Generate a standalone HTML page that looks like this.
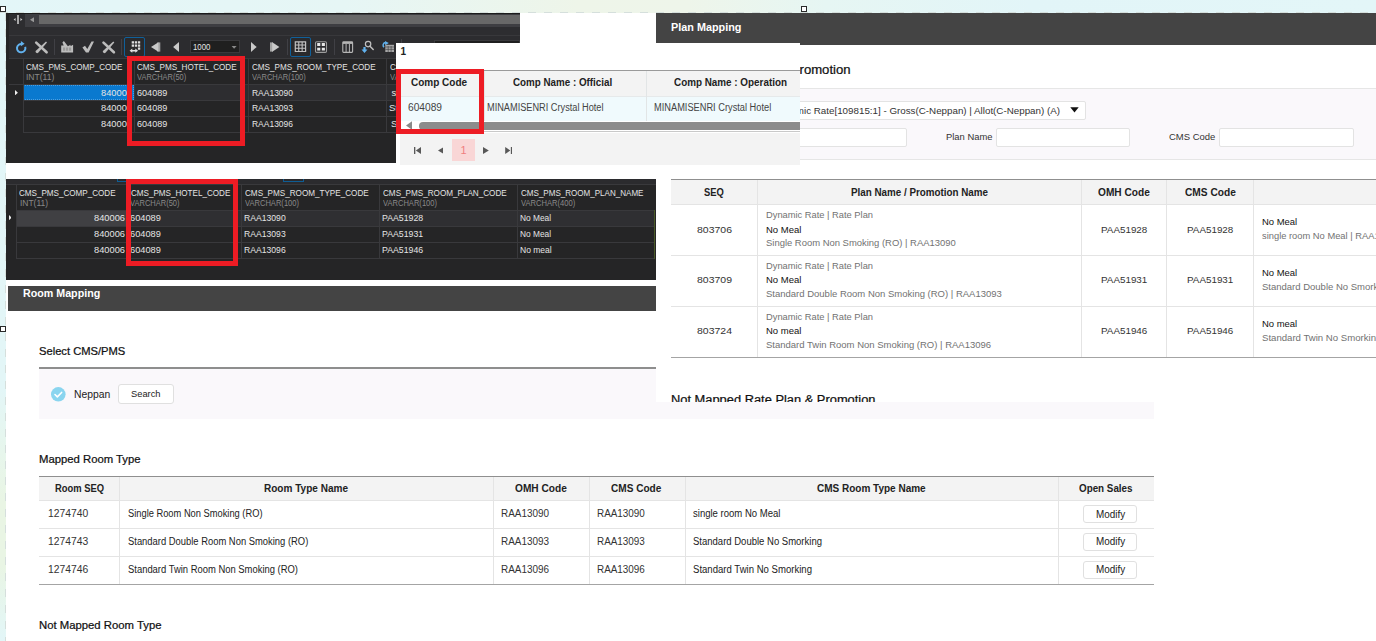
<!DOCTYPE html>
<html lang="en"><head><meta charset="utf-8"><title>Mapping</title><style>
html,body{margin:0;padding:0;}
body{width:1376px;height:641px;position:relative;overflow:hidden;background:#fff;font-family:"Liberation Sans", sans-serif;}
#r{position:absolute;left:0;top:0;width:1376px;height:641px;overflow:hidden;}
#r div,#r span,#r svg{position:absolute;}
#r div{box-sizing:border-box;}
#r .grp{left:0;top:0;width:0;height:0;}
#r span{white-space:pre;line-height:1;transform-origin:0 0;}
</style></head><body><div id="r">
<div class="grp page-bg">
<div style="left:0px;top:0px;width:1376px;height:13px;background:linear-gradient(90deg,#e3f6f8 0%,#e6f6f5 25%,#eef5e9 42%,#eef5ea 50%,#e6f6f3 60%,#e2f5f8 75%,#e3f6f8 100%);"></div>
<div style="left:0px;top:13px;width:6px;height:628px;background:linear-gradient(180deg,#e3f6f8 0%,#e3f6f7 60%,#e7f6ec 70%,#e9f5e4 78%,#e9f5e4 88%,#e4f6f3 97%,#e3f6f8 100%);"></div>
<div style="left:0px;top:12.2px;width:1376px;height:0.9px;background:repeating-linear-gradient(90deg,#d5dfdc 0 8px,transparent 8px 16px);"></div>
<div style="left:5.1px;top:13px;width:0.9px;height:628px;background:repeating-linear-gradient(180deg,#d5dfdc 0 8px,transparent 8px 16px);"></div>
</div>
<div class="grp plan-mapping">
<div style="left:656px;top:13px;width:720px;height:31.7px;background:#444;"></div>
<span style="left:671.20px;top:22px;font-size:11px;color:#fff;font-weight:bold;transform:scaleX(0.9846);">Plan Mapping</span>
<span style="left:666.21px;top:64px;font-size:12.5px;color:#111;transform:scaleX(1.0500);-webkit-text-stroke:0.24px #111;">Mapped Rate Plan &amp; Promotion</span>
<div style="left:671px;top:88px;width:705px;height:72px;background:#faf8fb;border-top:1px solid #e6e6e6;border-bottom:1px solid #e6e6e6;"></div>
<div style="left:700px;top:100.5px;width:386px;height:19px;background:#fff;border:1px solid #e3e3e3;border-radius:2px;"></div>
<span style="left:773.30px;top:106px;font-size:9.5px;color:#333;transform:scaleX(1.0301);">Dynamic Rate[109815:1] - Gross(C-Neppan) | Allot(C-Neppan) (A)</span>
<svg style="left:1070px;top:107px" width="9" height="6" viewBox="0 0 9 6"><path d="M0.3 0.3h8.4L4.5 5.6z" fill="#111"/></svg>
<div style="left:700px;top:128px;width:207px;height:18.6px;background:#fff;border:1px solid #e3e3e3;border-radius:2px;"></div>
<span style="left:946.20px;top:132px;font-size:9.5px;color:#333;transform:scaleX(0.9894);">Plan Name</span>
<div style="left:995.5px;top:128px;width:134.5px;height:18.6px;background:#fff;border:1px solid #e3e3e3;border-radius:2px;"></div>
<span style="left:1169.00px;top:132px;font-size:9.5px;color:#333;transform:scaleX(0.9964);">CMS Code</span>
<div style="left:1218.5px;top:128px;width:135px;height:18.6px;background:#fff;border:1px solid #e3e3e3;border-radius:2px;"></div>
<div style="left:671px;top:179.3px;width:705px;height:1.2px;background:#8f8f8f;"></div>
<div style="left:671px;top:180.3px;width:705px;height:24px;background:#f3f3f3;"></div>
<div style="left:671px;top:204.2px;width:705px;height:1px;background:#e4e4e4;"></div>
<div style="left:671px;top:255.2px;width:705px;height:1px;background:#e4e4e4;"></div>
<div style="left:671px;top:306.3px;width:705px;height:1px;background:#e4e4e4;"></div>
<div style="left:671px;top:356.8px;width:705px;height:1.7px;background:#a4a4a4;"></div>
<div style="left:757.3px;top:180.3px;width:1px;height:176.5px;background:#e4e4e4;"></div>
<div style="left:1081px;top:180.3px;width:1px;height:176.5px;background:#e4e4e4;"></div>
<div style="left:1166.4px;top:180.3px;width:1px;height:176.5px;background:#e4e4e4;"></div>
<div style="left:1253.3px;top:180.3px;width:1px;height:176.5px;background:#e4e4e4;"></div>
<span style="left:704.40px;top:188px;font-size:10px;color:#222;font-weight:bold;transform:scaleX(0.9373);">SEQ</span>
<span style="left:850.50px;top:188px;font-size:10px;color:#222;font-weight:bold;transform:scaleX(0.9822);">Plan Name / Promotion Name</span>
<span style="left:1098.20px;top:188px;font-size:10px;color:#222;font-weight:bold;transform:scaleX(1.0135);">OMH Code</span>
<span style="left:1185.00px;top:188px;font-size:10px;color:#222;font-weight:bold;transform:scaleX(1.0160);">CMS Code</span>
<span style="left:696.80px;top:225px;font-size:9.5px;color:#333;transform:scaleX(1.1040);">803706</span>
<span style="left:766.00px;top:210px;font-size:9.5px;color:#727272;transform:scaleX(0.9805);">Dynamic Rate | Rate Plan</span>
<span style="left:766.00px;top:225px;font-size:9.5px;color:#111;">No Meal</span>
<span style="left:766.00px;top:238px;font-size:9.5px;color:#727272;transform:scaleX(0.9938);">Single Room Non Smoking (RO) | RAA13090</span>
<span style="left:1100.95px;top:225px;font-size:9.5px;color:#333;transform:scaleX(1.0350);">PAA51928</span>
<span style="left:1187.25px;top:225px;font-size:9.5px;color:#333;transform:scaleX(1.0350);">PAA51928</span>
<span style="left:1262.00px;top:217px;font-size:9.5px;color:#111;transform:scaleX(0.9951);">No Meal</span>
<span style="left:1262.00px;top:231px;font-size:9.5px;color:#727272;transform:scaleX(0.9828);">single room No Meal | RAA13090</span>
<span style="left:696.80px;top:275px;font-size:9.5px;color:#333;transform:scaleX(1.1040);">803709</span>
<span style="left:766.00px;top:261px;font-size:9.5px;color:#727272;transform:scaleX(0.9805);">Dynamic Rate | Rate Plan</span>
<span style="left:766.00px;top:275px;font-size:9.5px;color:#111;">No Meal</span>
<span style="left:766.00px;top:289px;font-size:9.5px;color:#727272;">Standard Double Room Non Smoking (RO) | RAA13093</span>
<span style="left:1100.95px;top:275px;font-size:9.5px;color:#333;transform:scaleX(1.0350);">PAA51931</span>
<span style="left:1187.25px;top:275px;font-size:9.5px;color:#333;transform:scaleX(1.0350);">PAA51931</span>
<span style="left:1262.00px;top:268px;font-size:9.5px;color:#111;transform:scaleX(0.9951);">No Meal</span>
<span style="left:1262.00px;top:282px;font-size:9.5px;color:#727272;">Standard Double No Smorking | RAA13093</span>
<span style="left:696.80px;top:326px;font-size:9.5px;color:#333;transform:scaleX(1.1040);">803724</span>
<span style="left:766.00px;top:312px;font-size:9.5px;color:#727272;transform:scaleX(0.9805);">Dynamic Rate | Rate Plan</span>
<span style="left:766.00px;top:326px;font-size:9.5px;color:#111;">No meal</span>
<span style="left:766.00px;top:340px;font-size:9.5px;color:#727272;">Standard Twin Room Non Smoking (RO) | RAA13096</span>
<span style="left:1100.95px;top:326px;font-size:9.5px;color:#333;transform:scaleX(1.0350);">PAA51946</span>
<span style="left:1187.25px;top:326px;font-size:9.5px;color:#333;transform:scaleX(1.0350);">PAA51946</span>
<span style="left:1262.00px;top:319px;font-size:9.5px;color:#111;transform:scaleX(0.9951);">No meal</span>
<span style="left:1262.00px;top:333px;font-size:9.5px;color:#727272;transform:scaleX(1.0104);">Standard Twin No Smorking | RAA13096</span>
<span style="left:671.00px;top:394px;font-size:12.5px;color:#111;transform:scaleX(1.0291);-webkit-text-stroke:0.24px #111;">Not Mapped Rate Plan &amp; Promotion</span>
</div>
<div class="grp room-mapping">
<div style="left:6px;top:402px;width:1148.3px;height:239px;background:#fff;"></div>
<div style="left:8px;top:285.5px;width:648px;height:25px;background:#444;"></div>
<span style="left:23.00px;top:288px;font-size:11px;color:#fff;font-weight:bold;transform:scaleX(0.9718);">Room Mapping</span>
<span style="left:39.20px;top:346px;font-size:11.5px;color:#111;transform:scaleX(0.9715);-webkit-text-stroke:0.24px #111;">Select CMS/PMS</span>
<div style="left:39px;top:367px;width:617px;height:1.7px;background:#8e8e8e;"></div>
<div style="left:39px;top:368.7px;width:617px;height:50.1px;background:#faf8fb;"></div>
<div style="left:656px;top:402px;width:498.3px;height:16.8px;background:#faf8fb;"></div>
<svg style="left:51.1px;top:387.1px" width="14.6" height="14.6" viewBox="0 0 14 14"><circle cx="7" cy="7" r="7" fill="#8ad5ef"/><path d="M3.8 7.2l2.3 2.3 4.1-4.3" fill="none" stroke="#fff" stroke-width="1.5" stroke-linecap="round" stroke-linejoin="round"/></svg>
<span style="left:73.70px;top:390px;font-size:10px;color:#222;transform:scaleX(1.0362);">Neppan</span>
<div style="left:118.2px;top:384.3px;width:55.5px;height:19.4px;background:#fff;border:1px solid #e0e0e0;border-radius:3px;"></div>
<span style="left:131.30px;top:389px;font-size:9.5px;color:#222;transform:scaleX(0.9798);">Search</span>
<span style="left:39.20px;top:454px;font-size:11.5px;color:#111;transform:scaleX(0.9830);-webkit-text-stroke:0.24px #111;">Mapped Room Type</span>
<div style="left:39px;top:476.3px;width:1115.3px;height:1.2px;background:#8f8f8f;"></div>
<div style="left:39px;top:477.3px;width:1115.3px;height:23.4px;background:#f3f3f3;"></div>
<div style="left:39px;top:500px;width:1115.3px;height:1px;background:#e4e4e4;"></div>
<div style="left:39px;top:528px;width:1115.3px;height:1px;background:#e4e4e4;"></div>
<div style="left:39px;top:556px;width:1115.3px;height:1px;background:#e4e4e4;"></div>
<div style="left:39px;top:583.7px;width:1115.3px;height:1.7px;background:#a4a4a4;"></div>
<div style="left:119.3px;top:477.3px;width:1px;height:106.69999999999999px;background:#e4e4e4;"></div>
<div style="left:493px;top:477.3px;width:1px;height:106.69999999999999px;background:#e4e4e4;"></div>
<div style="left:589px;top:477.3px;width:1px;height:106.69999999999999px;background:#e4e4e4;"></div>
<div style="left:685px;top:477.3px;width:1px;height:106.69999999999999px;background:#e4e4e4;"></div>
<div style="left:1058px;top:477.3px;width:1px;height:106.69999999999999px;background:#e4e4e4;"></div>
<span style="left:54.50px;top:484px;font-size:10px;color:#222;font-weight:bold;transform:scaleX(0.9381);">Room SEQ</span>
<span style="left:264.00px;top:484px;font-size:10px;color:#222;font-weight:bold;transform:scaleX(1.0032);">Room Type Name</span>
<span style="left:514.50px;top:484px;font-size:10px;color:#222;font-weight:bold;transform:scaleX(1.0135);">OMH Code</span>
<span style="left:611.45px;top:484px;font-size:10px;color:#222;font-weight:bold;transform:scaleX(1.0060);">CMS Code</span>
<span style="left:816.95px;top:484px;font-size:10px;color:#222;font-weight:bold;">CMS Room Type Name</span>
<span style="left:1079.45px;top:484px;font-size:10px;color:#222;font-weight:bold;transform:scaleX(0.9822);">Open Sales</span>
<span style="left:47.80px;top:509px;font-size:10px;color:#333;transform:scaleX(1.0324);">1274740</span>
<span style="left:127.50px;top:509px;font-size:10px;color:#222;transform:scaleX(0.9308);">Single Room Non Smoking (RO)</span>
<span style="left:500.80px;top:509px;font-size:10px;color:#333;transform:scaleX(0.9922);">RAA13090</span>
<span style="left:596.80px;top:509px;font-size:10px;color:#333;transform:scaleX(0.9881);">RAA13090</span>
<span style="left:693.00px;top:509px;font-size:10px;color:#222;transform:scaleX(0.9540);">single room No Meal</span>
<div style="left:1083.1px;top:505.1px;width:54.4px;height:18.4px;background:#fff;border:1px solid #e0e0e0;border-radius:3px;"></div>
<span style="left:1095.60px;top:510px;font-size:10px;color:#222;transform:scaleX(0.9914);">Modify</span>
<span style="left:47.80px;top:537px;font-size:10px;color:#333;transform:scaleX(1.0324);">1274743</span>
<span style="left:127.50px;top:537px;font-size:10px;color:#222;transform:scaleX(0.9402);">Standard Double Room Non Smoking (RO)</span>
<span style="left:500.80px;top:537px;font-size:10px;color:#333;transform:scaleX(0.9922);">RAA13093</span>
<span style="left:596.80px;top:537px;font-size:10px;color:#333;transform:scaleX(0.9881);">RAA13093</span>
<span style="left:693.00px;top:537px;font-size:10px;color:#222;transform:scaleX(0.9510);">Standard Double No Smorking</span>
<div style="left:1083.1px;top:533.0px;width:54.4px;height:18.4px;background:#fff;border:1px solid #e0e0e0;border-radius:3px;"></div>
<span style="left:1095.60px;top:537px;font-size:10px;color:#222;transform:scaleX(0.9914);">Modify</span>
<span style="left:47.80px;top:565px;font-size:10px;color:#333;transform:scaleX(1.0324);">1274746</span>
<span style="left:127.50px;top:565px;font-size:10px;color:#222;transform:scaleX(0.9421);">Standard Twin Room Non Smoking (RO)</span>
<span style="left:500.80px;top:565px;font-size:10px;color:#333;transform:scaleX(0.9922);">RAA13096</span>
<span style="left:596.80px;top:565px;font-size:10px;color:#333;transform:scaleX(0.9881);">RAA13096</span>
<span style="left:693.00px;top:565px;font-size:10px;color:#222;transform:scaleX(0.9571);">Standard Twin No Smorking</span>
<div style="left:1083.1px;top:560.9px;width:54.4px;height:18.4px;background:#fff;border:1px solid #e0e0e0;border-radius:3px;"></div>
<span style="left:1095.60px;top:565px;font-size:10px;color:#222;transform:scaleX(0.9914);">Modify</span>
<span style="left:39.20px;top:620px;font-size:11.5px;color:#111;transform:scaleX(0.9843);-webkit-text-stroke:0.24px #111;">Not Mapped Room Type</span>
</div>
<div class="grp db-grid-1">
<div style="left:6px;top:13px;width:514px;height:149.5px;background:#2d2d30;"></div>
<div style="left:6px;top:13px;width:514px;height:1px;background:#1c1c1c;"></div>
<div style="left:6px;top:13px;width:3px;height:149.5px;background:#252526;"></div>
<div style="left:25px;top:14px;width:495px;height:12.5px;background:#3e3e42;"></div>
<div style="left:39px;top:15.4px;width:481px;height:8.4px;background:#686868;"></div>
<svg style="left:29.5px;top:16.8px" width="4.5" height="5.6" viewBox="0 0 4.5 5.6"><path d="M4.5 0v5.6L0 2.8z" fill="#999"/></svg>
<svg style="left:12.5px;top:15px" width="10" height="9" viewBox="0 0 10 9"><rect x="4.3" y="0" width="1.4" height="9" fill="#ddd"/><path d="M2.6 2.9v3.2L0.6 4.5zM7.4 2.9v3.2l2-1.6z" fill="#ccc"/></svg>
<div style="left:9px;top:35.1px;width:511px;height:1px;background:#38383b;"></div>
<div style="left:9px;top:36.1px;width:511px;height:21.5px;background:#2c2c2f;"></div>
<div style="left:54.2px;top:39px;width:1px;height:16px;background:#404045;"></div>
<div style="left:121.1px;top:39px;width:1px;height:16px;background:#404045;"></div>
<div style="left:286.8px;top:39px;width:1px;height:16px;background:#404045;"></div>
<div style="left:334px;top:39px;width:1px;height:16px;background:#404045;"></div>
<div style="left:400.9px;top:39px;width:1px;height:16px;background:#404045;"></div>
<div style="left:124.2px;top:37px;width:21px;height:19.6px;background:#2a2a2c;border:1.5px solid #10609a;border-radius:2px;"></div>
<div style="left:290px;top:37px;width:21px;height:19.6px;background:#2a2a2c;border:1.5px solid #10609a;border-radius:2px;"></div>
<div style="left:189.5px;top:40.3px;width:50.6px;height:12.8px;background:#1f1f1f;border:1px solid #39393c;"></div>
<div style="left:434px;top:40.3px;width:86px;height:12.8px;background:#1f1f1f;border:1px solid #39393c;"></div>
<span style="left:193.00px;top:42px;font-size:9.5px;color:#e6e6e6;transform:scaleX(0.8231);">1000</span>
<svg style="left:0;top:0" width="520" height="60" viewBox="0 0 520 60"><path d="M22.3 44.1A4.2 4.2 0 1 0 25.2 46.9" fill="none" stroke="#62b2ee" stroke-width="2"/><path d="M20.9 41.1l3.7 2.7-3.7 2.5z" fill="#62b2ee"/><path d="M36.2 42.6L46.6 52.3" stroke="#bcbcbc" stroke-width="2.6" stroke-linecap="round" fill="none"/><path d="M46 41.6l1 0.8L38.2 52.8a1.7 1.7 0 0 1-2.6-1.9z" fill="#bcbcbc"/><path d="M103.5 42.6L113.9 52.3" stroke="#bcbcbc" stroke-width="2.6" stroke-linecap="round" fill="none"/><path d="M113.3 41.6l1 0.8L105.5 52.8a1.7 1.7 0 0 1-2.6-1.9z" fill="#bcbcbc"/><path d="M61.2 52.4V45.6h2.5l-1.3-3 1.5-1.6 3.4 4.4 0.6 0.9 2.6-1.5v1.4l2.6-1.4v7.6z" fill="#bdbdbd"/><path d="M63 47.4h2.2v3.4H63zM66 47.4h2.2v3.4H66zM69 47.4h2.2v3.4H69z" fill="#9a9a9a"/><path d="M82.4 47.6l2.6-1.8 2.3 3.1 4.2-7.4h2.5L88.6 52.5h-2.6z" fill="#bcbcbc"/><path d="M131.7 41.3h2.3v2.3h-2.3zM131.7 44.4h2.3v2.3h-2.3zM134.8 41.3h2.3v2.3h-2.3zM134.8 44.4h2.3v2.3h-2.3zM137.9 41.3h2.3v2.3h-2.3zM137.9 44.4h2.3v2.3h-2.3zM137.9 47.5h2.3v2.3h-2.3z" fill="#dedede"/><path d="M129.6 50.7l2.7-2.1v1.3h3v-1.3l2.7 2.1-2.7 2.1v-1.3h-3v1.3z" fill="#e2e2e2"/><path d="M157.3 42.4h3v9.2h-3z" fill="#a2a2a2"/><path d="M158.4 42.2v9.6L151 47z" fill="#c9c9c9"/><path d="M179 42v10l-5.9-5z" fill="#c9c9c9"/><path d="M251 42v10l5.7-5z" fill="#c9c9c9"/><path d="M270 42.4h3v9.2h-3z" fill="#a2a2a2"/><path d="M272.2 42.2v9.6l7.2-4.8z" fill="#c9c9c9"/><path d="M231.6 45.9h5l-2.5 2.8z" fill="#8a8a8a"/><path fill-rule="evenodd" d="M294.7 41.3h11.5v10.8h-11.5zM295.9 42.4h2.3v2.1h-2.3zM295.9 45.6h2.3v2.1h-2.3zM295.9 48.8h2.3v2.1h-2.3zM299.3 42.4h2.3v2.1h-2.3zM299.3 45.6h2.3v2.1h-2.3zM299.3 48.8h2.3v2.1h-2.3zM302.7 42.4h2.3v2.1h-2.3zM302.7 45.6h2.3v2.1h-2.3zM302.7 48.8h2.3v2.1h-2.3z" fill="#c2c2c2"/><rect x="315.5" y="41.8" width="11" height="10.6" rx="1.2" fill="none" stroke="#9c9c9c" stroke-width="1.1"/><path d="M317.2 43.1h3.1v2.8h-3.1zM321.8 43.1h3.1v2.8h-3.1zM317.2 47.8h3.1v2.8h-3.1zM321.8 47.8h3.1v2.8h-3.1z" fill="#e8e8e8"/><rect x="342.8" y="41.9" width="9.8" height="10.5" rx="0.8" fill="none" stroke="#b6b6b6" stroke-width="1.1"/><path d="M342.8 42h9.8v1.9h-9.8z" fill="#b6b6b6"/><path d="M346.1 44v8.4M349.4 44v8.4" stroke="#b6b6b6" stroke-width="1"/><circle cx="368.1" cy="44.1" r="2.7" fill="none" stroke="#c0c0c0" stroke-width="1.2"/><path d="M370 46.2l3.2 3.3" stroke="#c0c0c0" stroke-width="1.5" stroke-linecap="round"/><path d="M363.4 47h2.2v2.6h1.9l-3 3.4-3-3.4h1.9z" fill="#62b2ee"/><path d="M384 47.2a2.7 2.7 0 0 1 1.4-4.7" fill="none" stroke="#62b2ee" stroke-width="1.5"/><path d="M385 41l3.8 2-3.6 2.3z" fill="#62b2ee"/><path d="M385.3 44.8h8.7v7.2h-8.7z" fill="#a6a6a6"/><path d="M385.3 47h8.7M385.3 49.4h8.7M388.2 46v6M391.1 46v6" stroke="#3a3a3c" stroke-width="0.6"/></svg>
<div style="left:9px;top:57.5px;width:511px;height:105px;background:#252526;"></div>
<div style="left:134px;top:84.5px;width:386px;height:15.5px;background:#2d2d30;"></div>
<div style="left:23px;top:84.5px;width:111px;height:15.8px;background:#0a79cf;border:1px dotted #4d9fe0;"></div>
<div style="left:9px;top:57.5px;width:511px;height:1px;background:#39393c;"></div>
<div style="left:9px;top:83.6px;width:511px;height:1px;background:#39393c;"></div>
<div style="left:23px;top:100.2px;width:511px;height:1px;background:#39393c;"></div>
<div style="left:23px;top:116px;width:511px;height:1px;background:#39393c;"></div>
<div style="left:23px;top:131.6px;width:511px;height:1px;background:#39393c;"></div>
<div style="left:23px;top:57.5px;width:1px;height:75px;background:#39393c;"></div>
<div style="left:134px;top:57.5px;width:1px;height:75px;background:#39393c;"></div>
<div style="left:248.3px;top:57.5px;width:1px;height:75px;background:#39393c;"></div>
<div style="left:386px;top:57.5px;width:1px;height:75px;background:#39393c;"></div>
<svg style="left:14.8px;top:90.1px" width="2.9" height="5.4" viewBox="0 0 3.4 6" preserveAspectRatio="none"><path d="M0 0l3.4 3L0 6z" fill="#f0f0f0"/></svg>
<span style="left:26.00px;top:62px;font-size:9.5px;color:#e4e4e4;transform:scaleX(0.8502);">CMS_PMS_COMP_CODE</span>
<span style="left:26.20px;top:73px;font-size:8.5px;color:#8a8a8a;transform:scaleX(1.0040);">INT(11)</span>
<span style="left:137.00px;top:62px;font-size:9.5px;color:#e4e4e4;transform:scaleX(0.8537);">CMS_PMS_HOTEL_CODE</span>
<span style="left:137.00px;top:73px;font-size:8.5px;color:#8a8a8a;transform:scaleX(0.8778);">VARCHAR(50)</span>
<span style="left:251.80px;top:62px;font-size:9.5px;color:#e4e4e4;transform:scaleX(0.8544);">CMS_PMS_ROOM_TYPE_CODE</span>
<span style="left:252.00px;top:73px;font-size:8.5px;color:#8a8a8a;transform:scaleX(0.8851);">VARCHAR(100)</span>
<span style="left:390.00px;top:62px;font-size:9.5px;color:#e4e4e4;transform:scaleX(0.8572);">CMS_PMS_ROOM_TYPE_NAME</span>
<span style="left:390.00px;top:73px;font-size:8.5px;color:#8a8a8a;transform:scaleX(0.8851);">VARCHAR(400)</span>
<span style="left:101.00px;top:88px;font-size:9.5px;color:#e4e4e4;transform:scaleX(0.9778);">840006</span>
<span style="left:137.00px;top:88px;font-size:9.5px;color:#e4e4e4;transform:scaleX(0.9557);">604089</span>
<span style="left:251.50px;top:88px;font-size:9.5px;color:#e4e4e4;transform:scaleX(0.8922);">RAA13090</span>
<span style="left:391.50px;top:88px;font-size:9.5px;color:#e4e4e4;">single room No Meal</span>
<span style="left:101.00px;top:103px;font-size:9.5px;color:#e4e4e4;transform:scaleX(0.9778);">840006</span>
<span style="left:137.00px;top:103px;font-size:9.5px;color:#e4e4e4;transform:scaleX(0.9557);">604089</span>
<span style="left:251.50px;top:103px;font-size:9.5px;color:#e4e4e4;transform:scaleX(0.8922);">RAA13093</span>
<span style="left:389.00px;top:103px;font-size:9.5px;color:#e4e4e4;">Standard Double No Smorking</span>
<span style="left:101.00px;top:119px;font-size:9.5px;color:#e4e4e4;transform:scaleX(0.9778);">840006</span>
<span style="left:137.00px;top:119px;font-size:9.5px;color:#e4e4e4;transform:scaleX(0.9557);">604089</span>
<span style="left:251.50px;top:119px;font-size:9.5px;color:#e4e4e4;transform:scaleX(0.8922);">RAA13096</span>
<span style="left:391.00px;top:119px;font-size:9.5px;color:#e4e4e4;">Standard Twin No Smorking</span>
<div style="left:127px;top:56px;width:118px;height:90px;background:transparent;border:5px solid #ed1c24;"></div>
</div>
<div class="grp db-grid-2">
<div style="left:6.3px;top:179px;width:649.7px;height:100.6px;background:#252526;"></div>
<div style="left:6.3px;top:179px;width:649.7px;height:5.4px;background:#2b2b2e;"></div>
<div style="left:117px;top:179px;width:9.5px;height:3.3px;background:transparent;border:1px solid #0e5d94;border-top:none;"></div>
<div style="left:283px;top:179px;width:20.5px;height:3.3px;background:transparent;border:1px solid #0e5d94;border-top:none;"></div>
<div style="left:16px;top:210.2px;width:639px;height:16px;background:#2f2f32;"></div>
<div style="left:16px;top:210.2px;width:110px;height:16px;background:#404043;"></div>
<div style="left:6.3px;top:184.4px;width:649.7px;height:1px;background:#39393c;"></div>
<div style="left:16px;top:209.7px;width:639px;height:1px;background:#39393c;"></div>
<div style="left:16px;top:226.3px;width:639px;height:1px;background:#39393c;"></div>
<div style="left:16px;top:242.3px;width:639px;height:1px;background:#39393c;"></div>
<div style="left:16px;top:258px;width:639px;height:1px;background:#39393c;"></div>
<div style="left:15.6px;top:184.4px;width:1px;height:74px;background:#39393c;"></div>
<div style="left:126px;top:184.4px;width:1px;height:74px;background:#39393c;"></div>
<div style="left:240.8px;top:184.4px;width:1px;height:74px;background:#39393c;"></div>
<div style="left:379px;top:184.4px;width:1px;height:74px;background:#39393c;"></div>
<div style="left:517px;top:184.4px;width:1px;height:74px;background:#39393c;"></div>
<div style="left:654.2px;top:209.7px;width:1px;height:49px;background:#4a5a28;"></div>
<svg style="left:8.5px;top:215.2px" width="2.6" height="5.2" viewBox="0 0 3 6" preserveAspectRatio="none"><path d="M0 0l3 3L0 6z" fill="#f0f0f0"/></svg>
<span style="left:19.40px;top:188px;font-size:9.5px;color:#e4e4e4;transform:scaleX(0.8511);">CMS_PMS_COMP_CODE</span>
<span style="left:19.60px;top:199px;font-size:8.5px;color:#8a8a8a;transform:scaleX(0.9933);">INT(11)</span>
<span style="left:131.00px;top:188px;font-size:9.5px;color:#e4e4e4;transform:scaleX(0.8511);">CMS_PMS_HOTEL_CODE</span>
<span style="left:130.00px;top:199px;font-size:8.5px;color:#8a8a8a;transform:scaleX(0.8832);">VARCHAR(50)</span>
<span style="left:244.50px;top:188px;font-size:9.5px;color:#e4e4e4;transform:scaleX(0.8551);">CMS_PMS_ROOM_TYPE_CODE</span>
<span style="left:244.70px;top:199px;font-size:8.5px;color:#8a8a8a;transform:scaleX(0.8884);">VARCHAR(100)</span>
<span style="left:382.50px;top:188px;font-size:9.5px;color:#e4e4e4;transform:scaleX(0.8551);">CMS_PMS_ROOM_PLAN_CODE</span>
<span style="left:382.70px;top:199px;font-size:8.5px;color:#8a8a8a;transform:scaleX(0.8884);">VARCHAR(100)</span>
<span style="left:520.50px;top:188px;font-size:9.5px;color:#e4e4e4;transform:scaleX(0.8468);">CMS_PMS_ROOM_PLAN_NAME</span>
<span style="left:520.70px;top:199px;font-size:8.5px;color:#8a8a8a;transform:scaleX(0.8934);">VARCHAR(400)</span>
<span style="left:93.70px;top:213px;font-size:9.5px;color:#e4e4e4;transform:scaleX(0.9778);">840006</span>
<span style="left:129.70px;top:213px;font-size:9.5px;color:#e4e4e4;transform:scaleX(0.9715);">604089</span>
<span style="left:244.00px;top:213px;font-size:9.5px;color:#e4e4e4;transform:scaleX(0.9074);">RAA13090</span>
<span style="left:382.00px;top:213px;font-size:9.5px;color:#e4e4e4;transform:scaleX(0.9210);">PAA51928</span>
<span style="left:520.30px;top:213px;font-size:9.5px;color:#e4e4e4;transform:scaleX(0.8763);">No Meal</span>
<span style="left:93.70px;top:229px;font-size:9.5px;color:#e4e4e4;transform:scaleX(0.9778);">840006</span>
<span style="left:129.70px;top:229px;font-size:9.5px;color:#e4e4e4;transform:scaleX(0.9715);">604089</span>
<span style="left:244.00px;top:229px;font-size:9.5px;color:#e4e4e4;transform:scaleX(0.9074);">RAA13093</span>
<span style="left:382.00px;top:229px;font-size:9.5px;color:#e4e4e4;transform:scaleX(0.9210);">PAA51931</span>
<span style="left:520.30px;top:229px;font-size:9.5px;color:#e4e4e4;transform:scaleX(0.8763);">No Meal</span>
<span style="left:93.70px;top:245px;font-size:9.5px;color:#e4e4e4;transform:scaleX(0.9778);">840006</span>
<span style="left:129.70px;top:245px;font-size:9.5px;color:#e4e4e4;transform:scaleX(0.9715);">604089</span>
<span style="left:244.00px;top:245px;font-size:9.5px;color:#e4e4e4;transform:scaleX(0.9074);">RAA13096</span>
<span style="left:382.00px;top:245px;font-size:9.5px;color:#e4e4e4;transform:scaleX(0.9210);">PAA51946</span>
<span style="left:520.30px;top:245px;font-size:9.5px;color:#e4e4e4;transform:scaleX(0.8961);">No meal</span>
<div style="left:126px;top:179px;width:112px;height:87px;background:transparent;border:5px solid #ed1c24;"></div>
</div>
<div class="grp company-popup">
<div style="left:396px;top:43px;width:404px;height:122px;background:#fff;"></div>
<span style="left:400.60px;top:47px;font-size:10px;color:#222;font-weight:bold;">1</span>
<div style="left:396px;top:69.8px;width:404px;height:1.2px;background:#9a9a9a;"></div>
<div style="left:396px;top:71px;width:404px;height:25.2px;background:#f3f3f3;"></div>
<div style="left:396px;top:96.2px;width:404px;height:24.6px;background:#f0fafd;"></div>
<div style="left:396px;top:95.8px;width:404px;height:0.8px;background:#e6e9ea;"></div>
<div style="left:484px;top:71px;width:1px;height:49.8px;background:#e2e5e6;"></div>
<div style="left:646.3px;top:71px;width:1px;height:49.8px;background:#e2e5e6;"></div>
<span style="left:411.00px;top:78px;font-size:10px;color:#222;font-weight:bold;">Comp Code</span>
<span style="left:513.00px;top:78px;font-size:10px;color:#222;font-weight:bold;transform:scaleX(0.9808);">Comp Name : Official</span>
<span style="left:673.60px;top:78px;font-size:10px;color:#222;font-weight:bold;transform:scaleX(0.9872);">Comp Name : Operation</span>
<span style="left:408.00px;top:103px;font-size:10px;color:#444;transform:scaleX(1.0187);">604089</span>
<span style="left:487.20px;top:103px;font-size:10px;color:#444;transform:scaleX(0.9196);">MINAMISENRI Crystal Hotel</span>
<span style="left:654.30px;top:103px;font-size:10px;color:#444;transform:scaleX(0.9251);">MINAMISENRI Crystal Hotel</span>
<svg style="left:406px;top:121.4px" width="6.4" height="9" viewBox="0 0 6.4 9"><path d="M6.4 0v9L0 4.5z" fill="#8a8a8a"/></svg>
<div style="left:418.5px;top:121.8px;width:381.5px;height:7.8px;background:#8c8c8c;border-radius:4px 0 0 4px;"></div>
<div style="left:400px;top:131.2px;width:400px;height:1px;background:#c9c9c9;"></div>
<div style="left:400px;top:133.2px;width:400px;height:31.6px;background:#f3f3f3;"></div>
<svg style="left:413.8px;top:146.5px" width="7.2" height="7" viewBox="0 0 7 6" preserveAspectRatio="none"><rect x="0" y="0" width="1.3" height="6" fill="#585858"/><path d="M6.8 0v6L1.8 3z" fill="#585858"/></svg>
<svg style="left:437.6px;top:146.5px" width="5.8" height="7" viewBox="0 0 5.4 6" preserveAspectRatio="none"><path d="M5.4 0v6L0 3z" fill="#585858"/></svg>
<div style="left:452px;top:139px;width:23px;height:22px;background:#f9d6d6;"></div>
<span style="left:460.40px;top:145px;font-size:11px;color:#ef7f7f;">1</span>
<svg style="left:483px;top:146.5px" width="5.8" height="7" viewBox="0 0 5.4 6" preserveAspectRatio="none"><path d="M0 0v6l5.4-3z" fill="#585858"/></svg>
<svg style="left:505.2px;top:146.5px" width="7.2" height="7" viewBox="0 0 7 6" preserveAspectRatio="none"><path d="M0.2 0v6l5-3z" fill="#585858"/><rect x="5.7" y="0" width="1.3" height="6" fill="#585858"/></svg>
<div style="left:396px;top:69px;width:88px;height:65px;background:transparent;border:5px solid #ed1c24;"></div>
</div>
<div class="grp selection-handles">
<div style="left:0px;top:6.3px;width:5.8px;height:6.2px;background:#fff;border:1.3px solid #2a2a2a;"></div>
<div style="left:800.8px;top:6.3px;width:5.8px;height:6.2px;background:#fff;border:1.3px solid #2a2a2a;"></div>
<div style="left:0px;top:326px;width:5.8px;height:6.2px;background:#fff;border:1.3px solid #2a2a2a;"></div>
</div>
</div></body></html>
